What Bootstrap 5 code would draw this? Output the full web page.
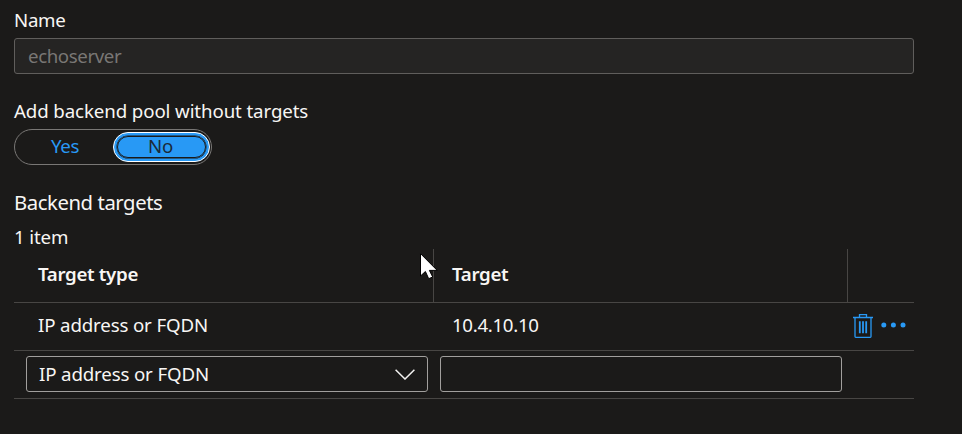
<!DOCTYPE html>
<html lang="en" data-bs-theme="dark">
<head>
<meta charset="utf-8">
<meta name="viewport" content="width=device-width, initial-scale=1">
<title>Backend pool</title>
<link href="https://cdn.jsdelivr.net/npm/bootstrap@5.3.0/dist/css/bootstrap.min.css" rel="stylesheet">
<style>
body{background:#1b1a19;color:#f8f6f4;font-family:"Segoe UI","Noto Sans","Open Sans",sans-serif;font-size:18.7px;line-height:26px;letter-spacing:-.15px;overflow:hidden}
.pool-form{width:914px;padding:7px 0 0 14px}
.form-label{line-height:26px;white-space:nowrap}
.t-name{letter-spacing:-.3px}
.q-label{margin-top:24px;padding-bottom:5px;letter-spacing:-.11px}
.form-control{height:36px;font-size:18.7px;line-height:26px;letter-spacing:inherit;border-radius:3px;padding:3px 12px 5px;background-color:#1b1a19;border-color:#a19f9d;color:#f8f6f4}
.name-field{margin-top:5px;padding-left:13px;letter-spacing:-.4px}
.form-control:disabled{background:#252423;border-color:#605e5c;color:#797775;opacity:1}
.form-control:disabled::placeholder{color:#797775;opacity:1}
.switch-pill{width:198px;height:36px;border:1px solid #797775;border-radius:18px;padding:2px 1px 2px 0;letter-spacing:-.3px}
.opt{line-height:28px;color:#2899f5;width:98px;padding-left:2px}
.opt-on{width:97px;height:30px;border:1px solid #fff;border-radius:15px;background:#2899f5;color:#1b2a3a;padding:3px}
.opt-ring{border:1px solid #1b1a19;box-shadow:0 0 0 .5px #1b1a19;border-radius:11px;height:22px;line-height:18px;padding-right:2px}
.section-title{font-size:20.3px;letter-spacing:-.42px;margin-top:24px;line-height:26px}
.count{margin-top:9px;margin-bottom:-1px}
.line-b{border-bottom:1px solid #484644}
.line-r{border-right:1px solid #484644}
.col-type{width:420px}
.col-target{width:414px}
.cell-target{padding-left:18px}
.head-row{height:54px;font-weight:600;letter-spacing:-.32px}
.head-row>div{padding-bottom:4px}
.body-row{height:48px;padding-bottom:3px}
.t-ip{letter-spacing:-.32px}
.actions{padding:2px 0 0 5px}
.dots{margin:0 0 2px 8px}
.edit-row{padding:0 0 1px 12px;gap:12px}
.pick{width:402px;padding:4px 12px}
.pointer{left:419px;top:252px}
</style>
<script src="https://cdn.jsdelivr.net/npm/bootstrap@5.3.0/dist/js/bootstrap.bundle.min.js"></script>
</head>
<body>
<form class="pool-form">
  <label class="form-label d-block mb-0 t-name" for="name">Name</label>
  <input id="name" class="form-control name-field" placeholder="echoserver" disabled>
  <div class="form-label mb-0 q-label">Add backend pool without targets</div>
  <div class="switch-pill d-flex" role="radiogroup">
    <div class="opt text-center" role="radio">Yes</div>
    <div class="opt-on text-center" role="radio" aria-checked="true"><div class="opt-ring">No</div></div>
  </div>
  <div class="section-title">Backend targets</div>
  <div class="count">1 item</div>
  <div>
    <div class="head-row d-flex line-b">
      <div class="col-type line-r d-flex align-items-center ps-4">Target type</div>
      <div class="col-target line-r d-flex align-items-center cell-target">Target</div>
    </div>
    <div class="body-row d-flex align-items-center line-b">
      <div class="col-type ps-4">IP address or FQDN</div>
      <div class="col-target cell-target t-ip">10.4.10.10</div>
      <div class="d-flex align-items-center actions">
        <svg width="20" height="24" viewBox="0 0 20 24" fill="none" stroke="#2899f5" stroke-width="1.3"><path d="M0 3.5h20M6.5 3V.7h7V3M2 4v18.5q0 .8.8.8h14.4q.8 0 .8-.8V4"/><path stroke-width="1.8" d="M6.8 7.2v12M10 7.2v12M13.2 7.2v12"/></svg>
        <svg class="dots" width="25" height="6" viewBox="0 0 25 6" fill="#2899f5"><circle cx="2.8" cy="3" r="2.5"/><circle cx="12.4" cy="3" r="2.5"/><circle cx="22" cy="3" r="2.5"/></svg>
      </div>
    </div>
    <div class="body-row d-flex align-items-center line-b edit-row">
      <div class="pick form-control d-flex align-items-center justify-content-between"><span>IP address or FQDN</span><svg width="20" height="11" viewBox="0 0 20 11" fill="none" stroke="#f3f2f1" stroke-width="1.5"><path d="M.6.7 10 10 19.4.7"/></svg></div>
      <input class="pick form-control" aria-label="Target">
    </div>
  </div>
</form>
<svg class="pointer position-absolute" width="20" height="30" viewBox="0 0 20 30"><path d="M1.5 1.6v22.4l4.9-4.5 3.3 7.2 4-1.7-3.3-6.6h7.8z" fill="#fff" stroke="#000" stroke-width="1"/></svg>
</body>
</html>
